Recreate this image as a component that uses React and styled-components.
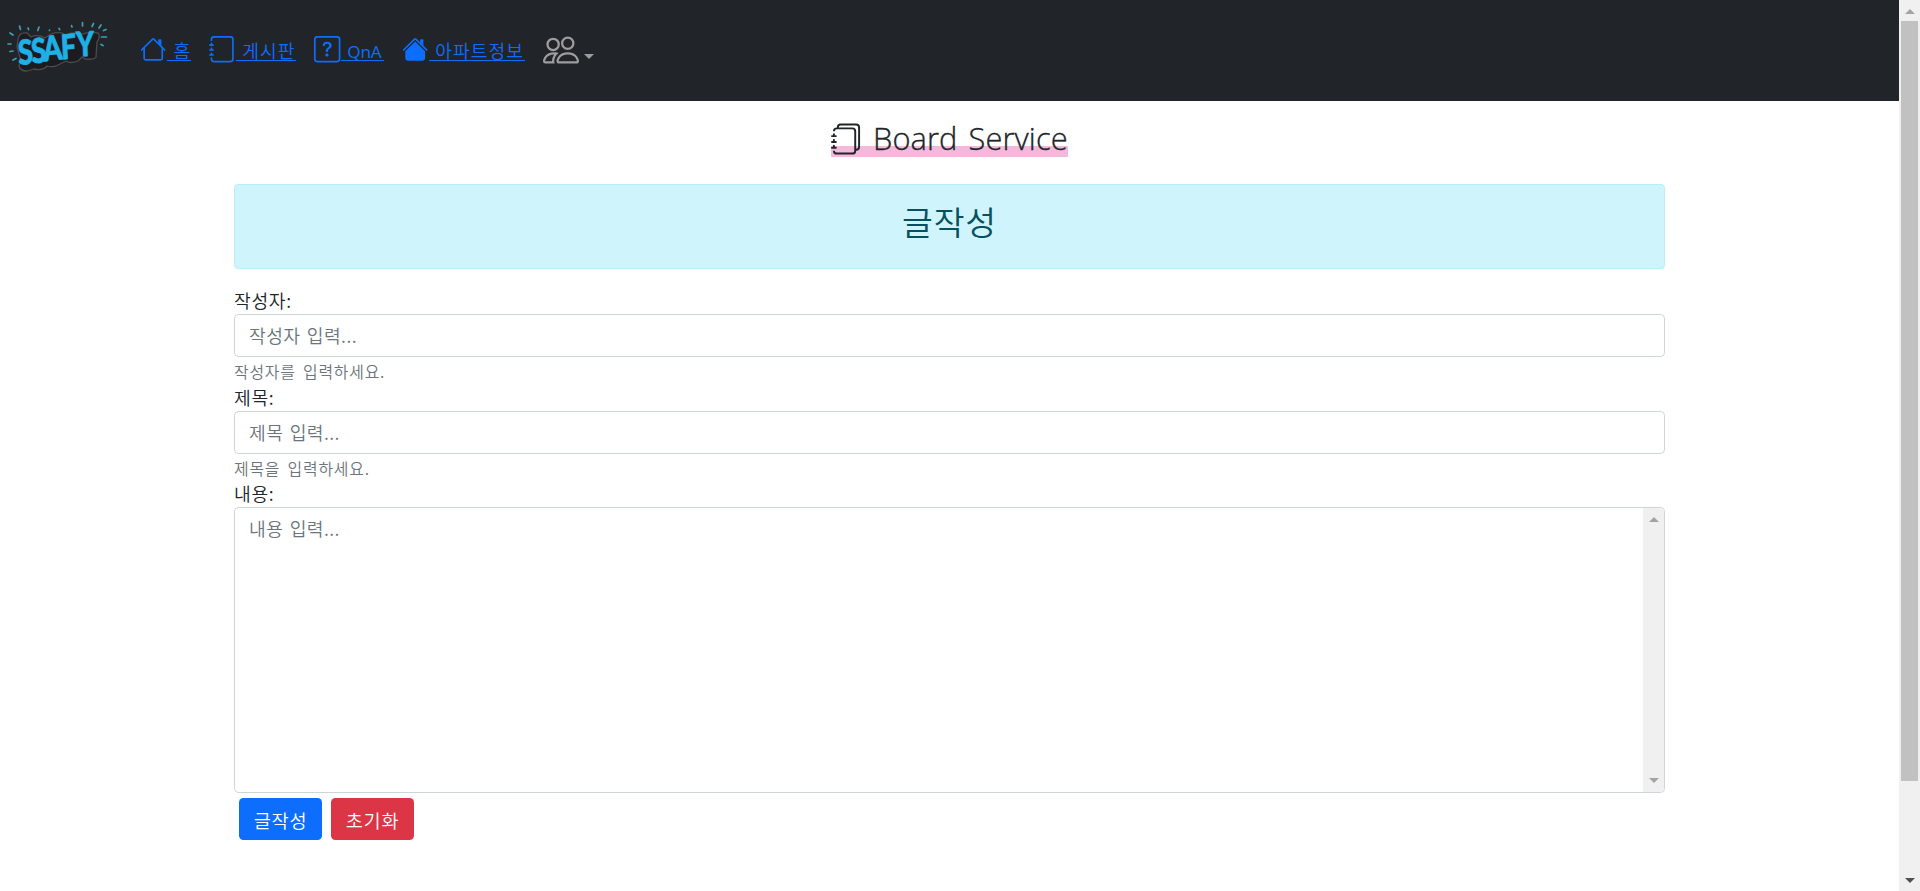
import React from 'react';
import styled, { createGlobalStyle } from 'styled-components';
import { BsJournal, BsJournals, BsQuestionSquare, BsPeople } from 'react-icons/bs';

const GlobalStyle = createGlobalStyle`
  *, *::before, *::after { box-sizing: border-box; }
  body {
    margin: 0;
    overflow: hidden;
    background: #fff;
    color: #212529;
    font-family: "Noto Sans CJK KR", sans-serif;
    font-weight: 350;
    font-size: 18.2px;
    letter-spacing: 0.4px;
    word-spacing: 2px;
  }
`;

const Screen = styled.div`
  display: flex;
  height: 891px;
`;

const Page = styled.div`
  flex: 1;
  min-width: 0;
`;

const Navbar = styled.nav`
  display: flex;
  align-items: flex-start;
  height: 101px;
  background: #212529;
`;

const Logo = styled.svg`
  display: block;
  width: 140px;
  height: 100px;
  flex: none;
  letter-spacing: 0;
`;

const NavList = styled.div`
  display: flex;
  gap: 18.4px;
  padding: 36.4px 0 0 0.4px;
`;

const NavLink = styled.a`
  display: flex;
  align-items: flex-start;
  height: 27px;
  color: #0d6efd;
  text-decoration: none;
  svg {
    width: 26.4px;
    height: 26.4px;
    flex: none;
  }
`;

const NavText = styled.span`
  display: block;
  width: ${(p) => p.$width}px;
  height: 24.6px;
  padding-left: 6.8px;
  line-height: 29px;
  white-space: nowrap;
  letter-spacing: 1px;
  border-bottom: 1px solid #0d6efd;
`;

const LatinNavText = styled(NavText)`
  padding-left: 6.5px;
  font-family: "Open Sans", sans-serif;
  font-weight: 400;
  font-size: 17.2px;
  letter-spacing: -0.2px;
  line-height: 32px;
`;

const UserMenu = styled.a`
  display: flex;
  align-items: flex-start;
  color: #9b9d9e;
  svg {
    width: 36px;
    height: 36px;
    margin-top: -4px;
  }
`;

const Caret = styled.span`
  margin: 17.5px 0 0 5px;
  border: 5px solid transparent;
  border-top-color: #9b9d9e;
  border-bottom: 0;
`;

const Container = styled.main`
  width: 1431px;
  margin: 0 auto;
`;

const TitleRow = styled.div`
  display: flex;
  justify-content: center;
  height: 83px;
  padding-top: 16px;
`;

const Title = styled.h3`
  display: flex;
  align-items: center;
  width: 237px;
  height: 40px;
  margin: 0;
  background: linear-gradient(to top, #f4b8dc 11px, transparent 11px);
  font-family: "Open Sans", sans-serif;
  font-weight: 300;
  font-size: 30.8px;
  white-space: nowrap;
  svg {
    width: 31px;
    height: 32px;
    margin-top: 4px;
    flex: none;
  }
`;

const TitleText = styled.span`
  margin: 2px 0 0 11px;
  letter-spacing: 0.1px;
  word-spacing: 3px;
  -webkit-text-stroke: 0.35px #212529;
`;

const Alert = styled.div`
  height: 85px;
  margin-bottom: 19px;
  border: 1px solid #b6effb;
  border-radius: 4px;
  background: #cff4fc;
  color: #055160;
  font-size: 33.5px;
  letter-spacing: 0.8px;
  line-height: 72px;
  text-align: center;
`;

const Label = styled.label`
  display: block;
  height: 26px;
  letter-spacing: 0.7px;
  line-height: 25px;
`;

const fieldStyle = `
  display: block;
  width: 100%;
  border: 1px solid #ced4da;
  border-radius: 4.4px;
  background: #fff;
  color: #6c757d;
`;

const Input = styled.div`
  ${fieldStyle}
  height: 43px;
  padding-left: 14px;
  line-height: 41px;
`;

const Help = styled.small`
  display: block;
  height: 27.5px;
  padding-top: 3px;
  color: #6c757d;
  font-size: 15.9px;
  letter-spacing: 0.8px;
  word-spacing: 3px;
  line-height: 23px;
`;

const TextArea = styled.div`
  ${fieldStyle}
  display: flex;
  justify-content: space-between;
  height: 286px;
  padding-left: 14px;
  line-height: 41px;
  overflow: hidden;
`;

const Track = styled.div`
  display: flex;
  flex-direction: column;
  align-items: center;
  justify-content: space-between;
  width: 21px;
  flex: none;
  background: #f0f0f0;
  padding: ${(p) => p.$pad};
`;

const Arrow = styled.span`
  flex: none;
  border: 5px solid transparent;
  ${(p) =>
    p.$up
      ? `border-top: 0; border-bottom-color: ${p.$color};`
      : `border-bottom: 0; border-top-color: ${p.$color};`}
`;

const Thumb = styled.div`
  width: 17px;
  height: 760px;
  margin: 7px 0 auto;
  flex: none;
  background: #c1c1c1;
`;

const Buttons = styled.div`
  display: flex;
  gap: 9px;
  padding: 5px 0 0 5px;
`;

const Button = styled.button`
  width: 83px;
  height: 42px;
  padding: 0;
  border: 0;
  border-radius: 4.4px;
  background: ${(p) => p.$color};
  color: #fff;
  font: inherit;
  font-size: 18.6px;
  letter-spacing: 0.8px;
  line-height: 41px;
`;

const Roof = () => (
  <path d="M7.293 1.5a1 1 0 0 1 1.414 0l6.647 6.646a.5.5 0 0 1-.708.708L8 2.207 1.354 8.854a.5.5 0 1 1-.708-.708L7.293 1.5z" />
);

const House = () => (
  <svg viewBox="0 0 16 16" fill="currentColor" fillRule="evenodd">
    <path d="M2 13.5V7h1v6.5a.5.5 0 0 0 .5.5h9a.5.5 0 0 0 .5-.5V7h1v6.5a1.5 1.5 0 0 1-1.5 1.5h-9A1.5 1.5 0 0 1 2 13.5zm11-11V6l-2-2V2.5a.5.5 0 0 1 .5-.5h1a.5.5 0 0 1 .5.5z" />
    <Roof />
  </svg>
);

const HouseFill = () => (
  <svg viewBox="0 0 16 16" fill="currentColor" fillRule="evenodd">
    <path d="m8 3.293 6 6V13.5a1.5 1.5 0 0 1-1.5 1.5h-9A1.5 1.5 0 0 1 2 13.5V9.293l6-6zm5-.793V6l-2-2V2.5a.5.5 0 0 1 .5-.5h1a.5.5 0 0 1 .5.5z" />
    <Roof />
  </svg>
);

const SsafyLogo = () => (
  <Logo viewBox="0 0 140 100">
    <path
      d="M10 33l3 2M8 44h3M10 51.500l3-.5M13 60l3-1.500M19.500 26l1 3.500M28 28l.6 1.500M39 27l-1.200 3.500M49.500 30v.5M59 28.500l.7 1M71.500 25.500l.5 1.500M82.500 22.500v3.500M93.500 23.500l-1.500 3M101 25l-2 3M106 29.500l-2.500 1M101.500 37h5M101 44.500l2 1"
      stroke="#3f9fae" strokeWidth="1.7" strokeLinecap="round" fill="none"
    />
    <path
      d="M18 39Q19 32 27 33L31 37Q38 34 45 38L51 34Q60 31 66 35Q73 31 80 35Q88 31 98 33Q101 36 97 42L96 57Q94 60 85 59L82 57L78 61Q70 64 66 61L60 64Q54 68 47 66Q43 71 34 69L27 71Q20 71 19 66L21 61L17 47Z"
      fill="#1c1b20" stroke="#4b4b4d" strokeWidth="1.3" strokeLinejoin="round"
    />
    <text
      transform="scale(0.8 1)"
      x="23.500 40 55 77 95.500"
      y="65 63.500 61.500 59.500 56.500"
      rotate="-5 -5 -6 -4 -2"
      fontFamily="Lato, sans-serif"
      fontWeight="900"
      fontSize="34"
      fill="#1fb0e6"
      stroke="#1fb0e6"
      strokeWidth="0.8"
      strokeLinejoin="round"
    >
      SSAFY
    </text>
  </Logo>
);

const Field = ({ label, placeholder, help }) => (
  <>
    <Label>{label}</Label>
    <Input>{placeholder}</Input>
    <Help>{help}</Help>
  </>
);

export default function App() {
  return (
    <Screen>
      <GlobalStyle />
      <Page>
        <Navbar>
          <SsafyLogo />
          <NavList>
            <NavLink><House /><NavText $width={24}>홈</NavText></NavLink>
            <NavLink><BsJournal /><NavText $width={60.4}>게시판</NavText></NavLink>
            <NavLink><BsQuestionSquare /><LatinNavText $width={43}>QnA</LatinNavText></NavLink>
            <NavLink><HouseFill /><NavText $width={96}>아파트정보</NavText></NavLink>
            <UserMenu><BsPeople /><Caret /></UserMenu>
          </NavList>
        </Navbar>
        <Container>
          <TitleRow>
            <Title><BsJournals /><TitleText>Board Service</TitleText></Title>
          </TitleRow>
          <Alert>글작성</Alert>
          <Field label="작성자:" placeholder="작성자 입력..." help="작성자를 입력하세요." />
          <Field label="제목:" placeholder="제목 입력..." help="제목을 입력하세요." />
          <Label>내용:</Label>
          <TextArea>
            내용 입력...
            <Track $pad="9px 0"><Arrow $up $color="#a3a3a3" /><Arrow $color="#a3a3a3" /></Track>
          </TextArea>
          <Buttons>
            <Button $color="#0d6efd">글작성</Button>
            <Button $color="#dc3545">초기화</Button>
          </Buttons>
        </Container>
      </Page>
      <Track $pad="9px 0 8px">
        <Arrow $up $color="#a3a3a3" />
        <Thumb />
        <Arrow $color="#505050" />
      </Track>
    </Screen>
  );
}
